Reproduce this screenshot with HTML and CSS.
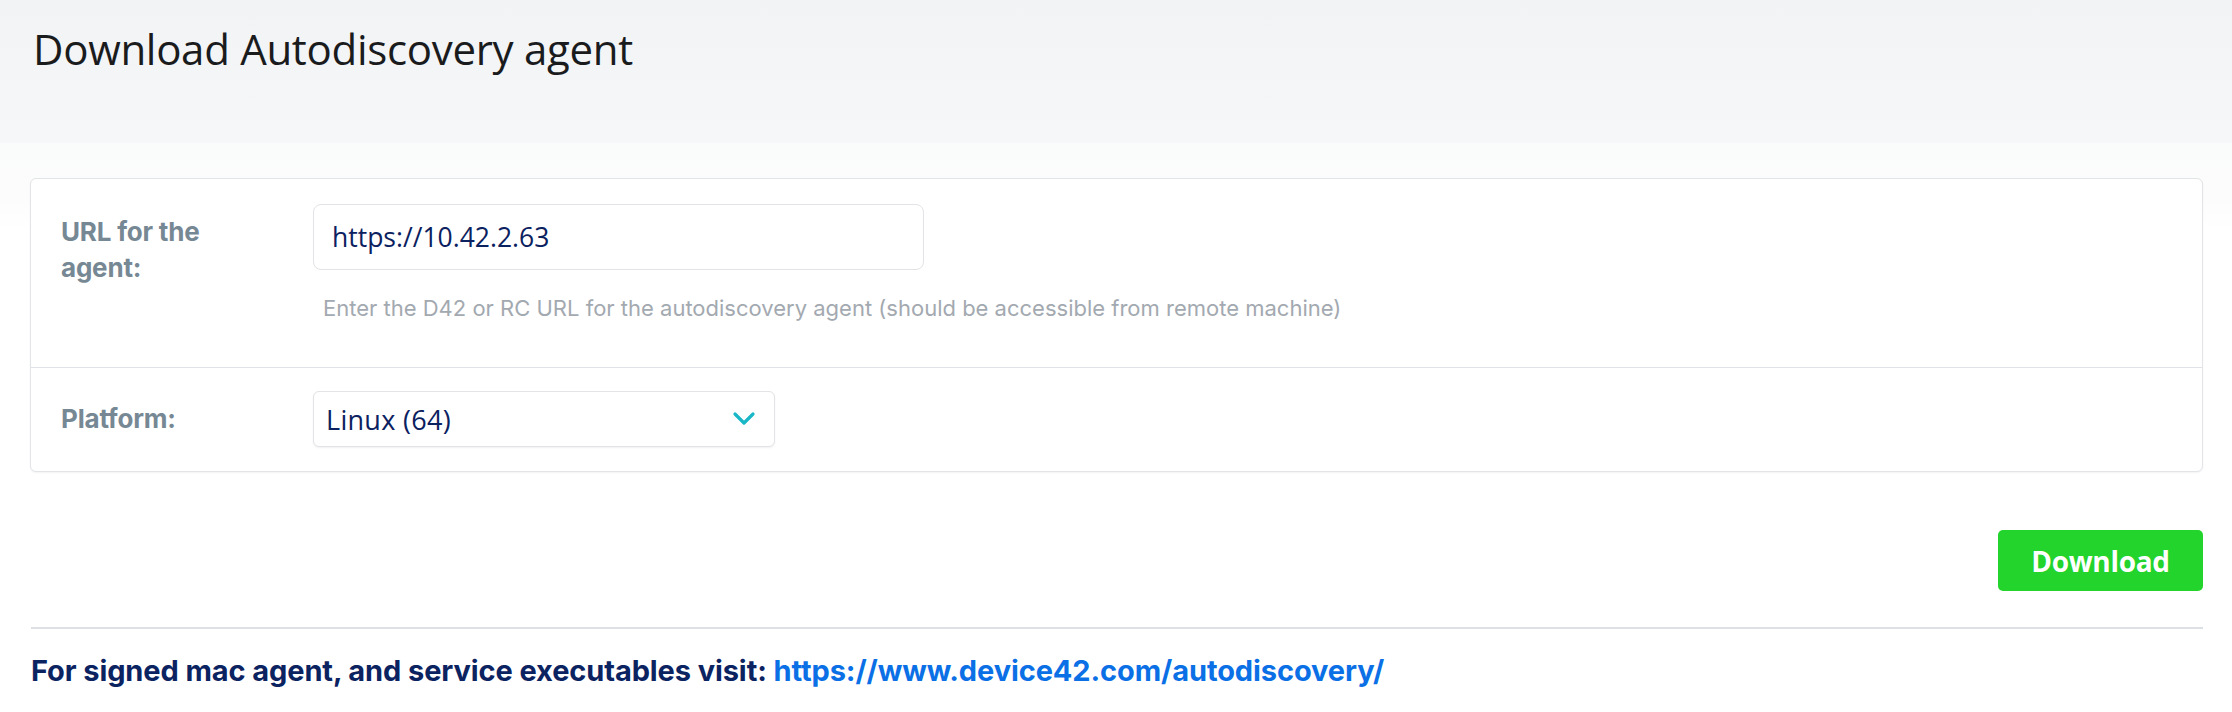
FILE: index.html
```html
<!DOCTYPE html>
<html lang="en">
<head>
<meta charset="utf-8">
<title>Download Autodiscovery agent</title>
<link rel="stylesheet" href="styles.css">
</head>
<body>
<header class="page-header">
  <h1 class="page-title">Download Autodiscovery agent</h1>
</header>
<main class="content">
  <section class="card">
    <div class="form-row form-row--url">
      <label class="form-label" for="agent-url">URL for the agent:</label>
      <div class="form-field">
        <input class="text-input" id="agent-url" type="text" value="https://10.42.2.63">
        <p class="help-text">Enter the D42 or RC URL for the autodiscovery agent (should be accessible from remote machine)</p>
      </div>
    </div>
    <div class="form-row form-row--platform">
      <label class="form-label" for="platform">Platform:</label>
      <div class="form-field">
        <div class="select" id="platform">
          <span class="select-value">Linux (64)</span>
          <svg class="select-chevron" width="24" height="16" viewBox="0 0 24 16" aria-hidden="true">
            <path d="M3 3 L12 12 L21 3" fill="none" stroke="#19b6c8" stroke-width="3.2" stroke-linecap="round" stroke-linejoin="round"/>
          </svg>
        </div>
      </div>
    </div>
  </section>
  <div class="actions">
    <button class="btn-download" type="button">Download</button>
  </div>
  <hr class="divider">
  <p class="footer-note">For signed mac agent, and service executables visit: <a class="footer-link" href="#">https://www.device42.com/autodiscovery/</a></p>
</main>
</body>
</html>
```
FILE: styles.css
```css
html, body {
  margin: 0;
  padding: 0;
}
body {
  min-height: 712px;
  background: #ffffff linear-gradient(to bottom, #f2f3f5 0, #f6f7f8 143px, #fafbfb 143px, #fcfcfd 200px, #ffffff 230px) no-repeat;
  background-size: 100% 230px;
  font-family: "Inter", "Lato", sans-serif;
}
.page-header {
  height: 143px;
  box-sizing: border-box;
  padding: 20px 30px 0 33px;
}
.page-title {
  margin: 0;
  font-family: "Open Sans", "Noto Sans", sans-serif;
  font-weight: 400;
  font-size: 42px;
  line-height: 58px;
  color: #1a1b1d;
  letter-spacing: -0.3px;
}
.content {
  padding: 35px 29px 0 30px;
}
.card {
  background: #fff;
  border: 1px solid #e2e4e7;
  border-radius: 6px;
  box-shadow: 0 1px 2px rgba(0, 0, 0, 0.05);
}
.form-row {
  display: grid;
  grid-template-columns: 252px 1fr;
  padding: 0 30px;
}
.form-row--url {
  padding-top: 25px;
  padding-bottom: 46px;
  border-bottom: 1px solid #dfe3e7;
}
.form-row--platform {
  padding-top: 23px;
  padding-bottom: 24px;
  align-items: center;
}
.form-label {
  font-family: "Inter", sans-serif;
  font-weight: 700;
  font-size: 26px;
  line-height: 36px;
  color: #778895;
  letter-spacing: -0.2px;
}
.form-row--url .form-label {
  padding-top: 10px;
  width: 170px;
}
.text-input {
  display: block;
  box-sizing: border-box;
  width: 611px;
  height: 66px;
  margin: 0;
  padding: 0 18px;
  border: 1px solid #e1e3e6;
  border-radius: 8px;
  background: #fff;
  font-family: "Open Sans", sans-serif;
  font-size: 26.5px;
  color: #0b2160;
  letter-spacing: 0;
  outline: none;
}
.help-text {
  margin: 26px 0 0 10px;
  font-family: "Inter", sans-serif;
  font-size: 22px;
  line-height: 25px;
  color: #a3a9b0;
}
.select {
  box-sizing: border-box;
  width: 462px;
  height: 56px;
  display: flex;
  align-items: center;
  justify-content: space-between;
  padding: 0 18px 0 12px;
  border: 1px solid #e1e3e6;
  border-radius: 6px;
  box-shadow: 0 1px 2px rgba(0, 0, 0, 0.06);
  background: #fff;
}
.select-value {
  font-family: "Open Sans", sans-serif;
  font-size: 27px;
  color: #0b2160;
  letter-spacing: 0.3px;
}
.select-chevron {
  display: block;
}
.actions {
  display: flex;
  justify-content: flex-end;
  margin-top: 58px;
}
.btn-download {
  width: 205px;
  height: 61px;
  border: none;
  border-radius: 5px;
  background: #22d42b;
  color: #fff;
  font-family: "Open Sans", sans-serif;
  font-weight: 700;
  font-size: 28px;
  letter-spacing: -0.3px;
  cursor: pointer;
}
.divider {
  margin: 36px 0 0 1px;
  border: none;
  height: 2px;
  background: #dde1e6;
}
.footer-note {
  margin: 24px 0 0 1px;
  font-family: "Inter", sans-serif;
  font-weight: 700;
  font-size: 29px;
  line-height: 36px;
  color: #0c2362;
  letter-spacing: -0.1px;
}
.footer-link {
  color: #0b70e6;
  text-decoration: none;
}
```
